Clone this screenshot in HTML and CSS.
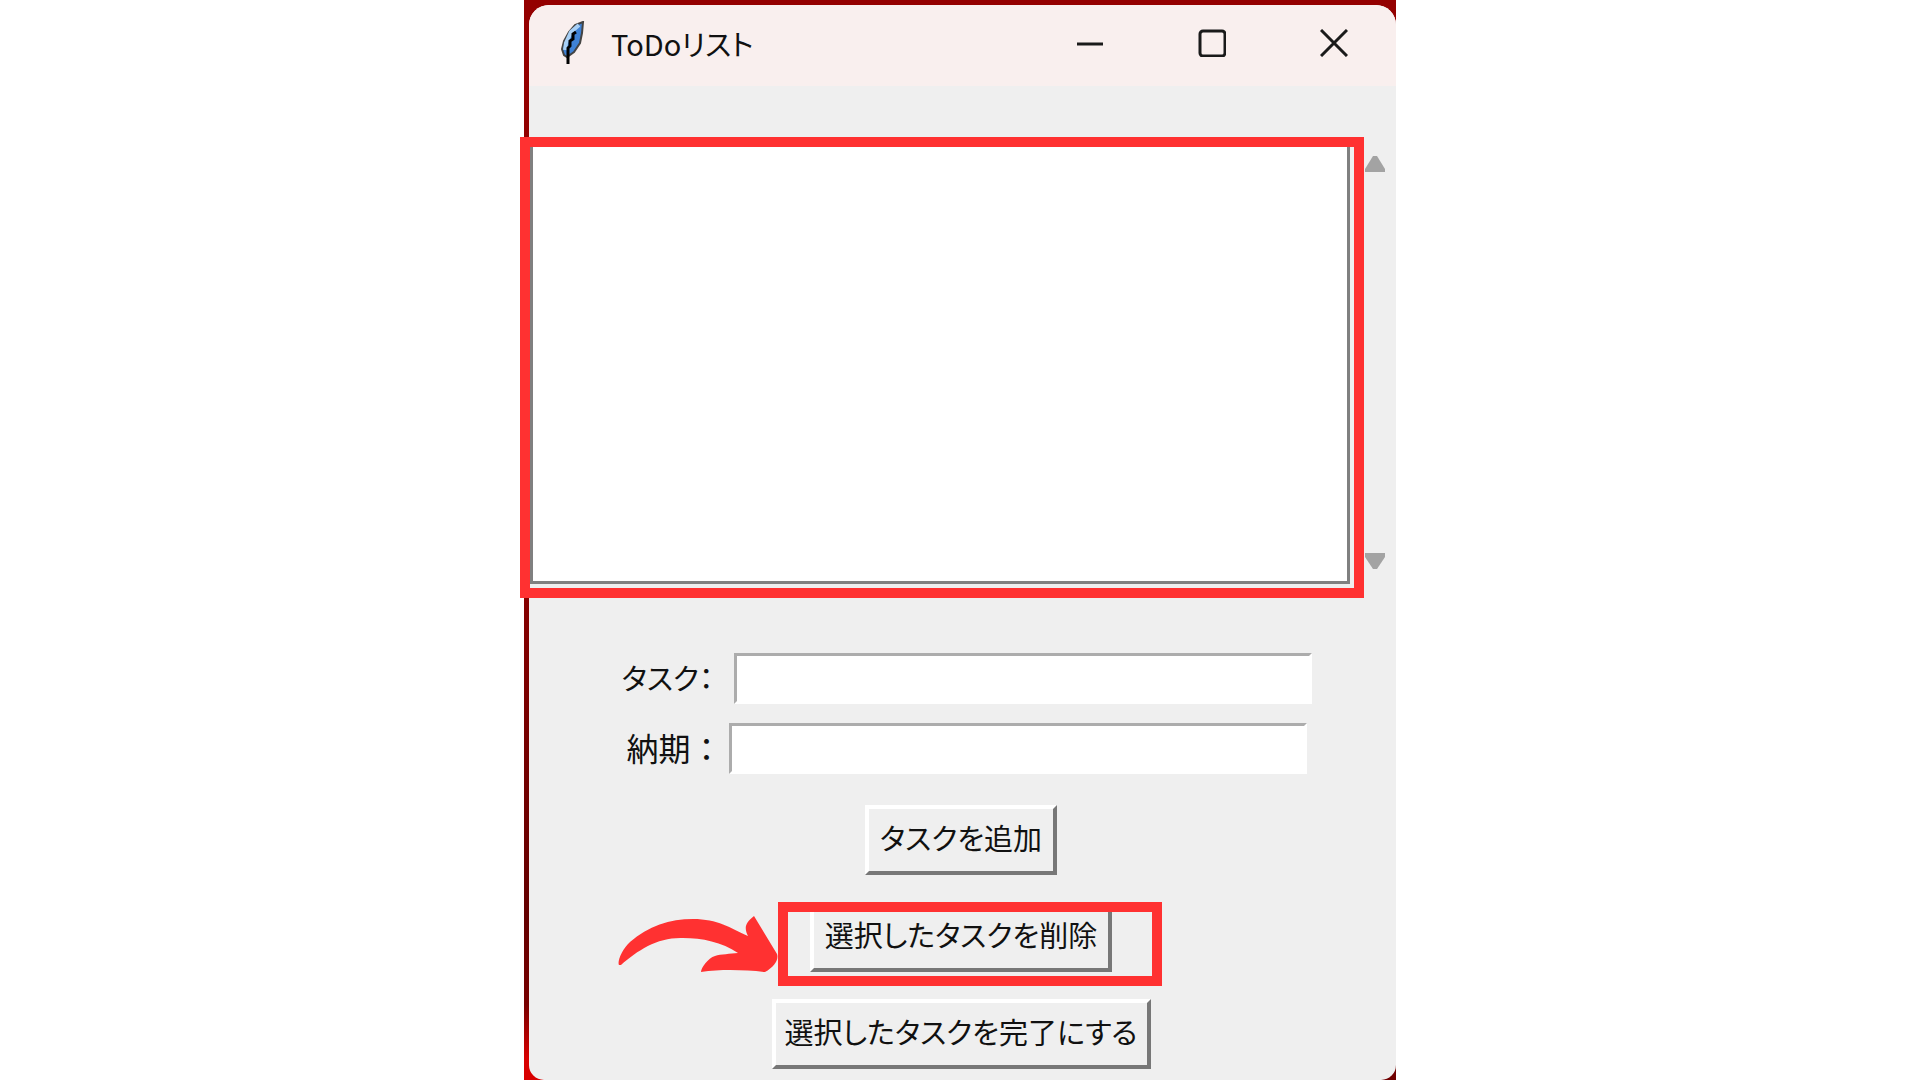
FILE: index.html
```html
<!DOCTYPE html>
<html lang="ja">
<head>
    <meta charset="UTF-8">
    <meta name="viewport" content="width=device-width, initial-scale=1.0">
    <title>ToDoリスト</title>
    <link rel="stylesheet" href="styles.css">
</head>
<body>
    <div class="desktop">
        <div class="window">
            <div class="titlebar">
                <svg class="feather" viewBox="0 0 24 44" width="24" height="44">
                    <path d="M22 1 L14 4 L8 11 L3 20 L1 28 L3 34 L6 36 L13 31 L19 22 L21 12 Z" fill="#3f82d6" stroke="#444" stroke-width="2"/>
                    <path d="M18 4 L10 11 L5 22 L4 29" fill="none" stroke="#a9d0f5" stroke-width="4"/>
                    <path d="M15 11 L12 13 L12 18 L9 20 L9 25 L7 27 V43" fill="none" stroke="#000" stroke-width="3"/>
                </svg>
                <h1>ToDoリスト</h1>
                <div class="controls">
                    <button aria-label="最小化">
                        <svg viewBox="0 0 28 28" width="28" height="28"><path d="M1 15H27"/></svg>
                    </button>
                    <button aria-label="最大化">
                        <svg viewBox="0 0 28 28" width="28" height="28"><rect x="2" y="2" width="25" height="25" rx="3"/></svg>
                    </button>
                    <button aria-label="閉じる">
                        <svg viewBox="0 0 28 28" width="28" height="28"><path d="M1 1L27 27M27 1L1 27"/></svg>
                    </button>
                </div>
            </div>

            <div class="content">
                <div class="list-row">
                    <select class="task-list" size="10" aria-label="タスク一覧"></select>
                    <div class="scrollbar">
                        <svg viewBox="0 0 22 18" width="22" height="18"><path d="M9 1h4l8 13v3H1v-3z"/></svg>
                        <svg viewBox="0 0 22 18" width="22" height="18"><path d="M9 17h4l8-12V1H1v4z"/></svg>
                    </div>
                    <div class="highlight highlight-list"></div>
                </div>

                <div class="field">
                    <label class="label-task" for="task">タスク：</label>
                    <input type="text" id="task" name="task">
                </div>
                <div class="field">
                    <label class="label-due" for="due">納期：</label>
                    <input type="text" id="due" name="due">
                </div>

                <div class="buttons">
                    <button class="btn btn-add">タスクを追加</button>
                    <div class="delete-row">
                        <button class="btn btn-delete">選択したタスクを削除</button>
                        <div class="highlight highlight-delete"></div>
                        <svg class="arrow" viewBox="0 0 160 58" width="160" height="58">
                            <path d="M1 49C-1 46 4 33 12 26C30 10 52 3 75 3C100 3 112 12 130 20C126 12 127 7 136 0L159 38C161 44 156 51 147 56C128 54 104 53 83 56C83 52 90 42 97 40C103 38 112 38 120 37C104 26 84 22 65 22C40 21 20 34 3 49Z"/>
                        </svg>
                    </div>
                    <button class="btn btn-done">選択したタスクを完了にする</button>
                </div>
            </div>
        </div>
    </div>
</body>
</html>
```
FILE: styles.css
```css
:root {
    --bg-color: #efefef;
    --title-color: #f9efee;
    --mark-color: #ff3131;
    --font-color: #111;
}

* {
    box-sizing: border-box;
}

body {
    margin: 0;
    background-color: #fff;
    color: var(--font-color);
    font-family: "Noto Sans CJK JP", sans-serif;
    font-feature-settings: "palt";
    font-size: 29px;
    line-height: 40px;
    display: grid;
    grid-template-columns: 524fr 872fr 524fr;
    min-height: 100vh;
}

.desktop {
    grid-column: 2;
    display: flex;
    padding: 5px 0 0 5px;
    background:
        radial-gradient(circle at bottom right, #700000 0, #700000 20px, transparent 40px),
        linear-gradient(to bottom, #940000 0, #8b0000 50%, #640000 85%, #780000 93%, #d80000 98%);
}

.window {
    flex: 1;
    min-width: 0;
    background-color: var(--bg-color);
    border-radius: 20px 20px 15px 15px;
}

.titlebar {
    display: flex;
    align-items: center;
    height: 81px;
    padding: 0 48px 5px 32px;
    background-color: var(--title-color);
    border-radius: 20px 20px 0 0;
}

.feather {
    margin-right: 26px;
}

h1 {
    margin: 0;
    font-size: 29px;
    font-weight: 400;
}

.controls {
    display: flex;
    gap: 94px;
    margin-left: auto;
}

.controls button {
    display: flex;
    padding: 0;
    border: none;
    background: none;
}

.controls svg {
    fill: none;
    stroke: #1a1a1a;
    stroke-width: 3;
}

.content {
    padding-top: 51px;
}

.list-row {
    position: relative;
    display: flex;
    height: 451px;
    margin-bottom: 65px;
}

.task-list {
    flex: 1;
    height: 447px;
    margin-right: 14px;
    border: 3px solid #808080;
    border-left-width: 4px;
    border-radius: 0;
    background-color: #fff;
    outline: none;
    appearance: none;
}

.scrollbar {
    display: flex;
    flex-direction: column;
    justify-content: space-between;
    width: 32px;
    padding: 18px 0;
    fill: #a3a3a3;
}

/* red marker frames */
.highlight {
    position: absolute;
    border: 10px solid var(--mark-color);
    pointer-events: none;
}

.highlight-list {
    inset: 0 32px -10px -9px;
}

.highlight-delete {
    inset: 0 -50px -14px -32px;
}

.field {
    display: flex;
    justify-content: center;
    align-items: center;
    height: 51px;
    margin-bottom: 19px;
}

.field label {
    padding: 0 0 4px 8px;
    white-space: nowrap;
}

.label-task {
    width: 120px;
}

.label-due {
    width: 110px;
    font-size: 32px;
    font-feature-settings: normal;
}

.field input {
    width: 578px;
    height: 51px;
    padding: 4px 8px;
    border: 3px solid #fff;
    border-top-color: #acacac;
    border-left-color: #acacac;
    font: inherit;
    outline: none;
}

.buttons {
    display: flex;
    flex-direction: column;
    align-items: center;
    gap: 27px;
    padding: 12px 3px 11px 0;
}

.btn {
    height: 70px;
    padding: 0 0 6px;
    border: 4px solid;
    border-color: #fff #777 #777 #fff;
    background-color: var(--bg-color);
    color: inherit;
    font: inherit;
    font-feature-settings: inherit;
    white-space: nowrap;
}

.btn-add {
    width: 192px;
}

.btn-delete {
    width: 302px;
}

.btn-done {
    width: 379px;
}

.delete-row {
    position: relative;
    display: flex;
}

.arrow {
    position: absolute;
    right: 334px;
    top: 14px;
    fill: var(--mark-color);
}
```
